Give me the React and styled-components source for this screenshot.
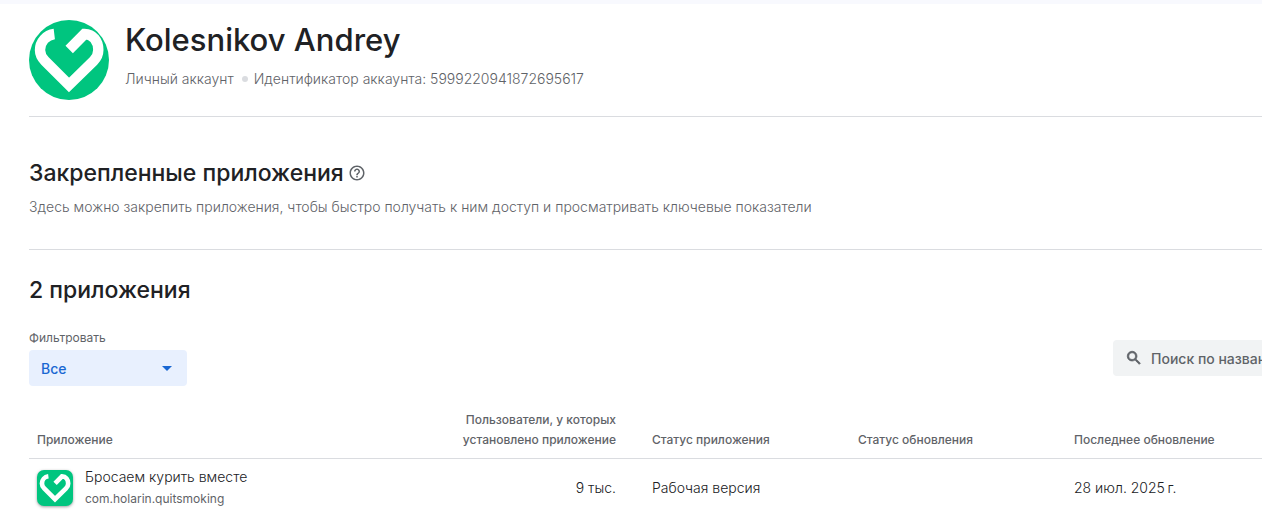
import styled, { createGlobalStyle } from "styled-components";
import { useState } from "react";

const GlobalStyle = createGlobalStyle`
  * {
    box-sizing: border-box;
  }
  body {
    margin: 0;
    background: #fff;
    color: #202124;
    font-family: Inter, "Open Sans", sans-serif;
    font-size: 14px;
    font-weight: 300;
    line-height: 20px;
  }
`
const Page = styled.main`
  border-top: 4px solid #f8f9fe;
  padding-left: 29px;
`
const AccountHeader = styled.header`
  display: flex;
  gap: 16px;
  padding: 16px 0;
  border-bottom: 1px solid #dadce0;
  h1 {
    margin: 0;
    font-size: 31px;
    font-weight: 500;
    line-height: 40px;
  }
`
const AccountInfo = styled.div`
  display: flex;
  align-items: center;
  margin-top: 9px;
  color: #5f6368;
`
const Dot = styled.span`
  width: 6px;
  height: 6px;
  margin: 0 6px 0 8px;
  border-radius: 50%;
  background: #dadce0;
`
const PinnedSection = styled.section`
  padding: 40px 0 32px;
  border-bottom: 1px solid #dadce0;
  p {
    margin: 8px 0 0;
    color: #5f6368;
  }
`
const SectionTitle = styled.h2`
  display: flex;
  align-items: center;
  gap: 4px;
  margin: 0;
  font-size: 23px;
  font-weight: 500;
  line-height: 32px;
`
const HelpButton = styled.button`
  display: flex;
  padding: 0;
  border: 0;
  background: none;
  color: #5f6368;
`
const AppsSection = styled.section`
  padding-top: 24px;
`
const Toolbar = styled.div`
  display: flex;
  align-items: center;
  justify-content: space-between;
  margin-top: 24px;
`
const Filter = styled.label`
  display: block;
  color: #5f6368;
  font-size: 12px;
  font-weight: 400;
  line-height: 16px;
`
const SelectBox = styled.span`
  display: flex;
  align-items: center;
  width: 158px;
  height: 36px;
  margin-top: 4px;
  border-radius: 4px;
  background: #e8f0fe;
  color: #1967d2;
  select {
    appearance: none;
    width: 100%;
    height: 100%;
    padding: 0 12px;
    border: 0;
    background: none;
    color: inherit;
    font: 500 14px Inter, sans-serif;
  }
  svg {
    flex: none;
    margin-right: 15px;
    pointer-events: none;
  }
`
const SearchBox = styled.label`
  display: flex;
  align-items: center;
  gap: 8px;
  width: 149px;
  height: 36px;
  padding-left: 12px;
  border-radius: 4px 0 0 4px;
  background: #f1f3f4;
  color: #5f6368;
  svg {
    flex: none;
  }
  input {
    flex: 1;
    min-width: 0;
    padding: 0;
    border: 0;
    outline: 0;
    background: none;
    color: inherit;
    font: 500 14px Inter, sans-serif;
  }
  input::placeholder {
    color: inherit;
  }
`
const AppTable = styled.table`
  width: 100%;
  margin-top: 16px;
  border-collapse: collapse;
  table-layout: fixed;
`
const HeadCell = styled.th`
  width: ${props => props.$width};
  padding: 8px 18px;
  border-bottom: 1px solid #dadce0;
  color: #5f6368;
  font-size: 12px;
  font-weight: 500;
  text-align: ${props => props.$align || "left"};
  vertical-align: bottom;
  &:first-child {
    padding-left: 8px;
  }
`
const Cell = styled.td`
  padding: 8px 18px;
  color: #202124;
  text-align: ${props => props.$align || "left"};
  &:first-child {
    padding-left: 8px;
  }
`
const AppLink = styled.a`
  display: flex;
  align-items: center;
  gap: 12px;
  color: inherit;
  text-decoration: none;
  small {
    display: block;
    margin-top: 2px;
    color: #5f6368;
    font-size: 12px;
    font-weight: 400;
  }
`
const Logo = styled.svg`
  flex: none;
  width: ${props => props.$size}px;
  height: ${props => props.$size}px;
  border-radius: ${props => props.$radius};
  background: #00c57f;
  box-shadow: ${props => props.$raised ? "0 1px 3px rgba(60, 64, 67, 0.5)" : "none"};
`

const apps = [
  { name: "Бросаем курить вместе", id: "com.holarin.quitsmoking", users: "9 тыс.", status: "Рабочая версия", update: "", date: "28 июл. 2025\u202fг." },
]

function HeartLogo(props) {
  return (
    <Logo viewBox="0 0 80 80" aria-hidden="true" {...props}>
      <path
        d="M25.3 14C17 15 11 22 11 30C11 35 13 38 16 41L40 65L64.5 41C67.5 38 69.3 35 69.3 30C69.3 21 64 14 55.5 14L40.2 29.5"
        fill="none"
        stroke="#fff"
        strokeWidth="10.4"
      />
    </Logo>
  )
}

function App() {
  const [filter, setFilter] = useState("all")
  const [search, setSearch] = useState("")

  return (
    <>
      <GlobalStyle />
      <Page>
        <AccountHeader>
          <HeartLogo $size={80} $radius="50%" />
          <div>
            <h1>Kolesnikov Andrey</h1>
            <AccountInfo>
              <span>Личный аккаунт</span>
              <Dot />
              <span>Идентификатор аккаунта: 5999220941872695617</span>
            </AccountInfo>
          </div>
        </AccountHeader>
        <PinnedSection>
          <SectionTitle>
            Закрепленные приложения
            <HelpButton type="button" aria-label="Справка">
              <svg width="18" height="18" viewBox="0 0 24 24" fill="currentColor">
                <path d="M11 18h2v-2h-2v2zm1-16C6.48 2 2 6.48 2 12s4.48 10 10 10 10-4.48 10-10S17.52 2 12 2zm0 18c-4.41 0-8-3.59-8-8s3.59-8 8-8 8 3.59 8 8-3.59 8-8 8zm0-14c-2.21 0-4 1.79-4 4h2c0-1.1.9-2 2-2s2 .9 2 2c0 2-3 1.75-3 5h2c0-2.25 3-2.5 3-5 0-2.21-1.79-4-4-4z" />
              </svg>
            </HelpButton>
          </SectionTitle>
          <p>Здесь можно закрепить приложения, чтобы быстро получать к ним доступ и просматривать ключевые показатели</p>
        </PinnedSection>
        <AppsSection>
          <SectionTitle>2 приложения</SectionTitle>
          <Toolbar>
            <Filter>
              Фильтровать
              <SelectBox>
                <select value={filter} onChange={(e) => setFilter(e.target.value)}>
                  <option value="all">Все</option>
                </select>
                <svg width="10" height="5" viewBox="0 0 10 5" fill="currentColor">
                  <path d="M0 0h10L5 5z" />
                </svg>
              </SelectBox>
            </Filter>
            <SearchBox>
              <svg width="18" height="18" viewBox="0 0 24 24" fill="currentColor">
                <path d="M15.5 14h-.79l-.28-.27C15.41 12.59 16 11.11 16 9.5 16 5.91 13.09 3 9.5 3S3 5.91 3 9.5 5.91 16 9.5 16c1.61 0 3.09-.59 4.23-1.57l.27.28v.79l5 4.99L20.49 19l-4.99-5zm-6 0C7.01 14 5 11.99 5 9.5S7.01 5 9.5 5 14 7.01 14 9.5 11.99 14 9.5 14z" stroke="currentColor" />
              </svg>
              <input
                type="text"
                aria-label="Поиск"
                placeholder="Поиск по названию"
                value={search}
                onChange={(e) => setSearch(e.target.value)}
              />
            </SearchBox>
          </Toolbar>
          <AppTable>
            <thead>
              <tr>
                <HeadCell>Приложение</HeadCell>
                <HeadCell $width="194px" $align="right">Пользователи, у которых установлено приложение</HeadCell>
                <HeadCell $width="206px">Статус приложения</HeadCell>
                <HeadCell $width="216px">Статус обновления</HeadCell>
                <HeadCell $width="206px">Последнее обновление</HeadCell>
              </tr>
            </thead>
            <tbody>
              {apps.map(app => (
                <tr key={app.id}>
                  <Cell>
                    <AppLink href={`#${app.id}`}>
                      <HeartLogo $size={36} $radius="7px" $raised />
                      <span>
                        {app.name}
                        <small>{app.id}</small>
                      </span>
                    </AppLink>
                  </Cell>
                  <Cell $align="right">{app.users}</Cell>
                  <Cell>{app.status}</Cell>
                  <Cell>{app.update}</Cell>
                  <Cell>{app.date}</Cell>
                </tr>
              ))}
            </tbody>
          </AppTable>
        </AppsSection>
      </Page>
    </>
  )
}

export default App;
